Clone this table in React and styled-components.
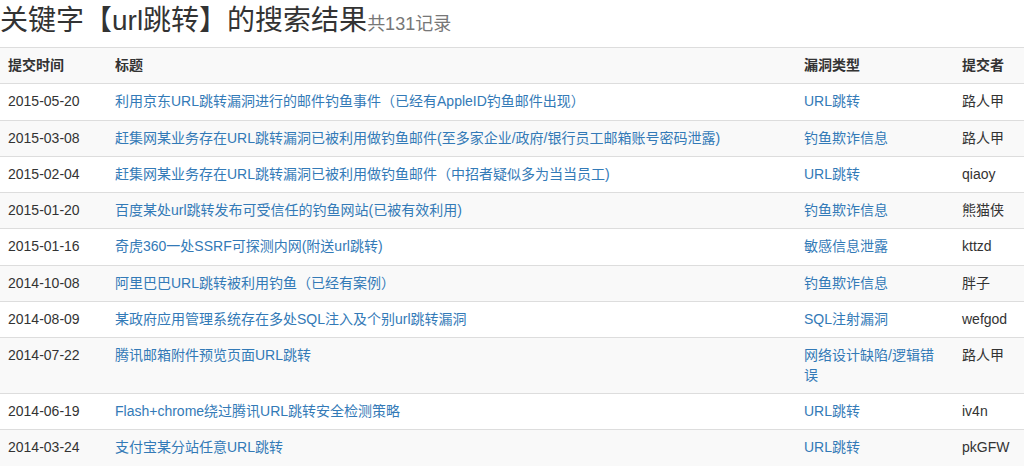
import React from "react";
import styled, { createGlobalStyle } from "styled-components";

const GlobalStyle = createGlobalStyle`
	* {
		box-sizing: border-box;
	}
	body {
		margin: 0;
		background: #fff;
		font-family: "Liberation Sans", Arial, "Noto Sans CJK SC", sans-serif;
		font-size: 14px;
		line-height: 19.3px;
		color: #333;
	}
`;

const Page = styled.div`
	width: 1024px;
	overflow: hidden;
`;

const Title = styled.h3`
	margin: 5px 0 7px 0;
	font-size: 28px;
	font-weight: 400;
	line-height: 31px;
	color: #333;
`;

const Count = styled.small`
	font-size: 18px;
	color: #777;
	font-weight: 400;
`;

const Table = styled.table`
	width: 1024px;
	border-collapse: collapse;
	border-spacing: 0;
	table-layout: fixed;
`;

const Row = styled.tr`
	&:nth-of-type(odd) {
		background: #f9f9f9;
	}
`;

const Head = styled.th`
	padding: 8px;
	text-align: left;
	font-weight: bold;
	vertical-align: bottom;
	border-top: 1px solid #ddd;
	width: ${(p) => p.$w}px;
`;

const Cell = styled.td`
	padding: 8px;
	vertical-align: top;
	border-top: 1px solid #ddd;
`;

const Link = styled.a`
	color: #337ab7;
	text-decoration: none;
`;

const rows = [
	["2015-05-20", "利用京东URL跳转漏洞进行的邮件钓鱼事件（已经有AppleID钓鱼邮件出现）", "URL跳转", "路人甲"],
	["2015-03-08", "赶集网某业务存在URL跳转漏洞已被利用做钓鱼邮件(至多家企业/政府/银行员工邮箱账号密码泄露)", "钓鱼欺诈信息", "路人甲"],
	["2015-02-04", "赶集网某业务存在URL跳转漏洞已被利用做钓鱼邮件（中招者疑似多为当当员工)", "URL跳转", "qiaoy"],
	["2015-01-20", "百度某处url跳转发布可受信任的钓鱼网站(已被有效利用)", "钓鱼欺诈信息", "熊猫侠"],
	["2015-01-16", "奇虎360一处SSRF可探测内网(附送url跳转)", "敏感信息泄露", "kttzd"],
	["2014-10-08", "阿里巴巴URL跳转被利用钓鱼（已经有案例）", "钓鱼欺诈信息", "胖子"],
	["2014-08-09", "某政府应用管理系统存在多处SQL注入及个别url跳转漏洞", "SQL注射漏洞", "wefgod"],
	["2014-07-22", "腾讯邮箱附件预览页面URL跳转", "网络设计缺陷/逻辑错误", "路人甲"],
	["2014-06-19", "Flash+chrome绕过腾讯URL跳转安全检测策略", "URL跳转", "iv4n"],
	["2014-03-24", "支付宝某分站任意URL跳转", "URL跳转", "pkGFW"],
];

export default function App() {
	return (
		<Page>
			<GlobalStyle />
			<Title>
				关键字【url跳转】的搜索结果<Count>共131记录</Count>
			</Title>
			<Table>
				<tbody>
					<Row>
						<Head $w={107}>提交时间</Head>
						<Head $w={689}>标题</Head>
						<Head $w={158}>漏洞类型</Head>
						<Head $w={70}>提交者</Head>
					</Row>
					{rows.map(([date, title, type, author]) => (
						<Row key={date + title}>
							<Cell>{date}</Cell>
							<Cell>
								<Link href="#">{title}</Link>
							</Cell>
							<Cell>
								<Link href="#">{type}</Link>
							</Cell>
							<Cell>{author}</Cell>
						</Row>
					))}
				</tbody>
			</Table>
		</Page>
	);
}
